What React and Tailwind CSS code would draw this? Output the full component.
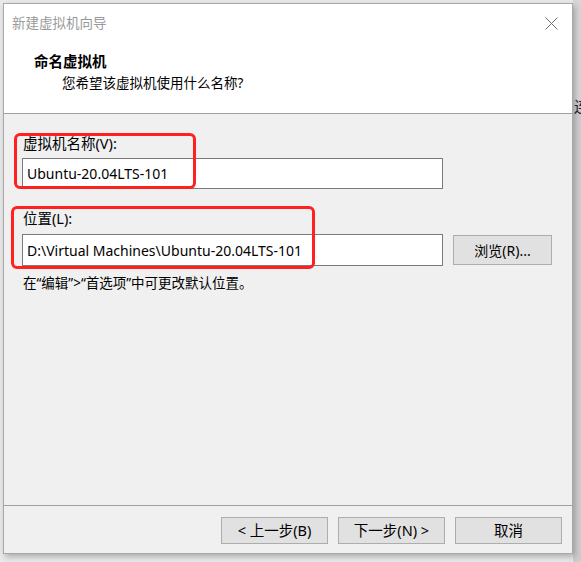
export default function App() {
  const font = { fontFamily: '"Noto Sans", "Noto Sans CJK SC", sans-serif' };
  return (
    <div className="w-[581px] h-[562px] bg-[#e9e9e9] relative overflow-hidden" style={font}>
      <div className="absolute left-[573px] top-0 w-[8px] h-[562px] bg-[#cdcdcd]" />
      <div className="absolute left-[573px] top-0 w-[8px] h-[100px] bg-[#d6d6d6]" />
      <div className="absolute left-[574px] top-[96px] text-[15px] leading-[20px] text-[#223] overflow-hidden w-[7px]">连</div>
      <div className="pt-[3px] pl-[3px]">
        <div className="relative w-[570px] h-[551px] border border-[#a8a8a8] bg-[#f0f0f0] flex flex-col shadow-[2px_3px_6px_rgba(0,0,0,0.25)]">
          {/* header */}
          <div className="h-[109px] bg-white flex flex-col">
            <div className="flex items-center justify-between h-[38px] pl-[8px] pr-[14px]">
              <span className="text-[13.5px] text-[#9a9a9a] leading-[20px]">新建虚拟机向导</span>
              <svg width="13" height="13" viewBox="0 0 13 13" className="text-[#6e6e6e]">
                <path d="M0.5 0.5 L12.5 12.5 M12.5 0.5 L0.5 12.5" stroke="currentColor" strokeWidth="1" />
              </svg>
            </div>
            <div className="pl-[30px] pt-[9px] text-[14.5px] font-bold leading-[20px] text-black">命名虚拟机</div>
            <div className="pl-[58px] pt-[2px] text-[13.5px] leading-[20px] text-black">您希望该虚拟机使用什么名称?</div>
          </div>
          <div className="h-px bg-[#a0a0a0]" />
          {/* body */}
          <div className="relative h-[391px] pl-[18px] pt-[19px]">
            <div className="pl-px text-[14.5px] leading-[20px] text-black">虚拟机名称(V):</div>
            <div className="mt-[5px] w-[421px] h-[31px] border border-[#7a7a7a] bg-white flex items-center pl-[4px] text-[14px] text-black">
              Ubuntu-20.04LTS-101
            </div>
            <div className="mt-[19px] pl-px text-[14.5px] leading-[20px] text-black">位置(L):</div>
            <div className="mt-[6px] flex items-center">
              <div className="w-[421px] h-[32px] border border-[#7a7a7a] bg-white flex items-center pl-[4px] text-[14px] text-black">
                D:\Virtual Machines\Ubuntu-20.04LTS-101
              </div>
              <div className="ml-[10px] w-[99px] h-[30px] border border-[#adadad] bg-[#e1e1e1] flex items-center justify-center text-[14px] text-black">
                浏览(R)...
              </div>
            </div>
            <div className="mt-[7px] pl-px text-[13.5px] leading-[20px] text-black">在“编辑”&gt;“首选项”中可更改默认位置。</div>
            <div className="absolute left-[10px] top-[19px] w-[182px] h-[56px] border-[3px] border-[#ff2020] rounded-[6px]" />
            <div className="absolute left-[7px] top-[92px] w-[304px] h-[63px] border-[3px] border-[#ff2020] rounded-[6px]" />
          </div>
          <div className="h-px bg-[#a0a0a0]" />
          {/* footer */}
          <div className="flex-1 flex justify-end items-start pt-[11px] pr-[10px] gap-[10px]">
            <div className="w-[107px] h-[27px] border border-[#adadad] bg-[#e1e1e1] flex items-center justify-center text-[14.5px] text-black">&lt; 上一步(B)</div>
            <div className="w-[107px] h-[27px] border border-[#adadad] bg-[#e1e1e1] flex items-center justify-center text-[14.5px] text-black">下一步(N) &gt;</div>
            <div className="w-[107px] h-[27px] border border-[#adadad] bg-[#e1e1e1] flex items-center justify-center text-[14.5px] text-black">取消</div>
          </div>
        </div>
      </div>
    </div>
  );
}
